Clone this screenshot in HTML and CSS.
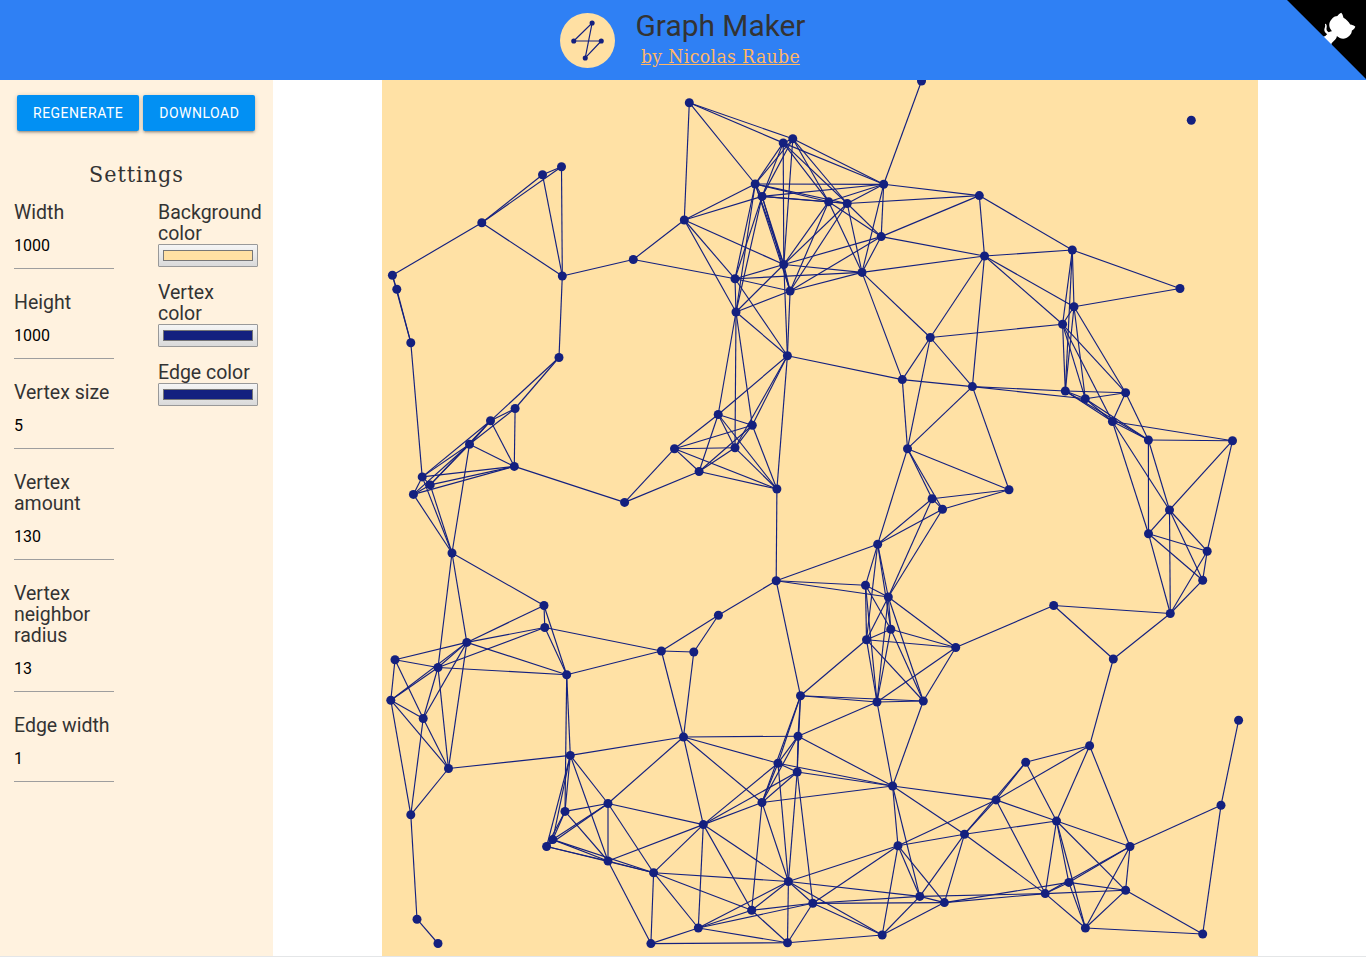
FILE: index.html
```html
<!DOCTYPE html>
<html lang="en">
<head>
<meta charset="utf-8">
<title>Graph Maker</title>
<link rel="stylesheet" href="styles.css">
</head>
<body>
<header class="header">
  <svg class="logo" viewBox="0 0 56 56">
    <circle cx="28" cy="28" r="28" fill="#ffe0a3"/>
    <path d="M14 28.5H42L25.7 45.8L32.7 10.2Z" fill="none" stroke="#14207f" stroke-width="1.2"/>
    <g fill="#14207f"><circle cx="14" cy="28.5" r="2.6"/><circle cx="42" cy="28.5" r="2.6"/><circle cx="25.7" cy="45.8" r="2.6"/><circle cx="32.7" cy="10.2" r="2.6"/></g>
  </svg>
  <div class="brand">
    <h1 class="title">Graph Maker</h1>
    <a class="author" href="#">by Nicolas Raube</a>
  </div>
  <a class="corner" href="#" aria-label="View source on GitHub">
    <svg viewBox="0 0 250 250">
      <path d="M0 0L115 115L130 115L142 142L250 250L250 0Z" fill="#000"/>
      <path d="M128.3,109.0 C113.8,99.7 119.0,89.6 119.0,89.6 C122.0,82.7 120.5,78.6 120.5,78.6 C119.2,72.0 123.4,76.3 123.4,76.3 C127.3,80.9 125.5,87.3 125.5,87.3 C122.9,97.6 130.6,101.9 134.4,103.2" fill="#fff"/>
      <path d="M115.0,115.0 C114.9,115.1 118.7,116.5 119.8,115.4 L133.7,101.6 C136.9,99.2 139.9,98.4 142.2,98.6 C133.8,88.0 127.5,74.4 143.8,58.0 C148.5,53.4 154.0,51.2 159.7,51.0 C160.3,49.4 163.2,43.6 171.4,40.1 C171.4,40.1 176.1,42.5 178.8,56.2 C183.1,58.6 187.2,61.8 190.9,65.4 C194.5,69.0 197.7,73.2 200.1,77.6 C213.8,80.2 216.3,84.9 216.3,84.9 C212.7,93.1 206.9,96.0 205.4,96.6 C205.1,102.4 203.0,107.8 198.3,112.5 C181.9,128.9 168.3,122.5 157.7,114.1 C157.9,116.9 156.7,120.9 152.7,124.9 L141.0,136.5 C139.8,137.7 141.6,141.9 141.8,141.8 Z" fill="#fff"/>
    </svg>
  </a>
</header>
<main class="main">
  <aside class="sidebar">
    <div class="actions"><button class="btn">Regenerate</button><button class="btn">Download</button></div>
    <h2 class="heading">Settings</h2>
    <div class="settings">
      <div class="numbers">
        <label class="field">Width<input class="number" value="1000"></label>
        <label class="field">Height<input class="number" value="1000"></label>
        <label class="field">Vertex size<input class="number" value="5"></label>
        <label class="field">Vertex amount<input class="number" value="130"></label>
        <label class="field">Vertex neighbor radius<input class="number" value="13"></label>
        <label class="field">Edge width<input class="number" value="1"></label>
      </div>
      <div class="colors">
        <label class="color-field">Background color<span class="picker"><span class="swatch sand"></span></span></label>
        <label class="color-field">Vertex color<span class="picker"><span class="swatch navy"></span></span></label>
        <label class="color-field">Edge color<span class="picker"><span class="swatch navy"></span></span></label>
      </div>
    </div>
  </aside>
  <section class="stage">
    <svg class="graph" id="graph" viewBox="382 80 876 876"></svg>
  </section>
</main>
<script src="graph.js"></script>
</body>
</html>
```
FILE: styles.css
```css
* { box-sizing: border-box; }
body { margin: 0; height: 957px; overflow: hidden; background: #fff; color: #333; font-family: Roboto, sans-serif; }
.header { position: relative; height: 80px; background: #2f80f4; display: flex; justify-content: center; gap: 20px; padding-top: 12px; }
.logo { width: 55px; height: 55px; margin-top: 1px; }
.brand { display: flex; flex-direction: column; align-items: center; width: 171px; }
.title { margin: -3px 0 0; font-size: 29.9px; line-height: 34px; font-weight: 400; white-space: nowrap; }
.author { font-family: "Roboto Slab", "DejaVu Serif Condensed", "DejaVu Serif", serif; font-stretch: condensed; font-size: 19.2px; line-height: 28px; letter-spacing: .37px; color: #ffb765; white-space: nowrap; text-decoration: underline; }
.corner { position: absolute; top: 0; right: 0; width: 79px; height: 79px; }
.corner svg { display: block; width: 79px; height: 79px; }
.main { display: flex; height: 877px; border-bottom: 1px solid #e4e6e8; }
.sidebar { width: 273px; flex: none; background: #fff2df; padding: 15px 12px 0 14px; }
.actions { display: flex; gap: 4px; padding-left: 3px; }
.btn { height: 36px; border: 0; border-radius: 2px; padding: 0 16px; background: #0290f3; color: #fff; font: 14px/36px Roboto, sans-serif; letter-spacing: .5px; text-transform: uppercase; box-shadow: 0 2px 2px rgba(0,0,0,.14), 0 3px 1px -2px rgba(0,0,0,.12), 0 1px 5px rgba(0,0,0,.2); }
.heading { margin: 28px 2px 12px 0; text-align: center; font: 400 23px/31px "Roboto Slab", "DejaVu Serif Condensed", "DejaVu Serif", serif; font-stretch: condensed; letter-spacing: 1px; }
.settings { display: flex; gap: 44px; }
.numbers { width: 100px; display: flex; flex-direction: column; }
.colors { width: 103px; }
.field, .color-field { display: block; font-size: 19.5px; line-height: 21px; }
.number { display: block; width: 100px; height: 46px; margin-bottom: 23px; border: 0; border-bottom: 1px solid #9e9e9e; padding: 0; background: transparent; color: #000; font: 16px Roboto, sans-serif; }
.picker { display: block; width: 100px; height: 23px; margin: 0 0 15px; padding: 5px 4px; border: 1px solid #999; background: linear-gradient(#f5f5f5, #dadada); border-radius: 1px; }
.swatch { display: block; height: 11px; border: 1px solid #777; }
.sand { background: #ffe0a3; }
.navy { background: #14207f; }
.stage { flex: 1; display: flex; justify-content: center; }
.graph { display: block; width: 876px; height: 876px; background: #ffe1a5; }
.edge { stroke: #14207f; stroke-width: 1.15; fill: none; }
.vertex { fill: #14207f; }
```
FILE: graph.js
```js
const vertices = {
  A: [689.3, 102.7], B: [783.2, 142.9], C: [792.8, 138.8], D: [755.2, 184], E: [762.1, 196.4], F: [684.3, 220],
  G: [783.8, 264.5], H: [735, 278.8], I: [790.1, 291], J: [736, 312], K: [828.6, 201.7], L: [847.2, 203.5],
  M: [883.7, 184.3], N: [881.2, 236.6], O: [862, 272.4], P: [921.5, 81], Q: [633.3, 259.5], R: [787.4, 355.8],
  S: [718.2, 414.5], T: [752.3, 425.2], U: [674.5, 448.7], V: [735, 447.8], W: [699.1, 471.5], X: [776.9, 489],
  Y: [902.3, 379.6], Z: [930.3, 337.5], a: [979.3, 195.6], b: [984.5, 256], c: [1072.3, 250], d: [1074, 306.8],
  e: [1062.6, 324.3], f: [972.4, 386.6], g: [1065.3, 391], h: [1085.3, 398.8], i: [1125.6, 392.7], j: [1112.4, 421.5],
  k: [1148.4, 440], l: [1232.5, 440.7], m: [1169.5, 510], n: [1148.5, 533.7], o: [1207.2, 551.2], p: [1202.7, 580.2],
  q: [1170.3, 613.5], r: [1180, 288.5], s: [1053.7, 605.5], t: [1113.3, 659], u: [1009, 489.8], v: [932.1, 498.7],
  w: [942.5, 509.2], x: [877.7, 544.3], y: [907.5, 448.7], z: [1191.3, 120.3],
  aa: [865.5, 585.3], ab: [888.3, 597], ac: [890.8, 629.2], ad: [866.5, 639.7], ae: [955.7, 647.5], af: [877, 702],
  ag: [923.3, 701], ah: [776.2, 580.8], ai: [800.5, 695.8], aj: [798, 736.2], ak: [778, 763.2], al: [797.2, 772],
  am: [762, 802.5], an: [683.5, 737], ao: [892.6, 786], ap: [703.3, 824.6], aq: [788.4, 881.5], ar: [812.8, 903.3],
  as: [751.7, 910.3], at: [608, 803.5], au: [570.3, 755.4], av: [698.3, 928], aw: [653.6, 872.7], ax: [608, 861],
  ay: [650.9, 943.6], ba: [787.5, 942.7], bb: [882.2, 935], bc: [898, 845.7], bd: [919.8, 896.4], be: [944.4, 902.6],
  bf: [964.5, 834.2], bg: [996, 799.9], bi: [1045.2, 893.6], bj: [1068.8, 882.4], bk: [1056.5, 821], bl: [1025.7, 762.3],
  bm: [1089.6, 745.7], bn: [1130, 846.5], bo: [1125.6, 890.3], bp: [1085.4, 928], bq: [1221, 805.3], br: [1202.7, 934],
  bs: [1238.6, 720.3], ca: [544, 605.5], cb: [544.8, 627.5], cc: [466.8, 642.4], cd: [395, 659.8], ce: [438, 667.5],
  cf: [390.8, 700.2], cg: [423.2, 718.5], ch: [448.5, 768.5], ci: [410.8, 814.8], cj: [566.7, 674.7], ck: [565, 811.4],
  cl: [552.8, 839.6], cm: [546.6, 846.5], cn: [661.4, 651], co: [693.8, 652], cp: [718.4, 615.3], cq: [417, 919.2],
  cr: [438, 943.5], cs: [452, 553], da: [515.1, 408.5], db: [490.5, 420.8], dc: [469.5, 444.3], dd: [514.3, 466.4],
  de: [422.2, 476.9], df: [430.2, 484.9], dg: [413.4, 494.4], dh: [624.6, 502.4], di: [559, 357.5], dj: [410.8, 342.7],
  dk: [561.5, 166.8], dl: [542.5, 174.7], dm: [481.8, 222.8], dn: [562.3, 276], do: [392.4, 275.3], dp: [396.8, 289.3]
};

// Each row lists a vertex followed by the neighbours it connects to.
const neighbours = `
A B C D F|B D E M K L G|C D E M K L G B|D M K L G I H J F E|E M K L F G I H J
F G H J Q|G H I J K L N O R|H I O J Q R|I J K L N O R|J R S V T
K L M N O|L M N O a|M N O P a|N O a b|O b Z Y|R Y S T V X
S T U V W X|T U V W X|U V W X dh|V W X|W X dh|X ah
a b c|b c d e Z f|c d e r g|e d Z g h i j|d r g h i|Y Z f y|Z y f|f y u g h
g h i j k|h i j k|i j k|j k l m n|k l m n|l m o|m n o p q|n o p q|o p q|p q|q s t|s t|t bm
y u v w x|u v w|v w x ab|w x ab|x ah aa ab ad ac
aa ab ad ac af|ab ac ad af ag ae|ac ad ae af ag|ad ae af ag ai|ae af ag s|af ag|ah aa ab ai cp
ai af ag aj ak al am|aj af ak al am an ao|ak al am ao an ap aq|al am ao ap aq ar|am ao ap aq as an
an ap at au cn co|ap aq as av aw ax at|aw aq as av ay ax at|ay av ba ax|av ba as aq ar
as aq ar ba|aq ar ba bb bc bd|ar ba bb bc bd be|ba bb|bb bc bd be|bc bd be ao bf bg
ao bd bf bg af ag|bd be bf bi|be bf bi bj|bf bg bi bk bl|bg bl bk bi bm|bl bm bk|bm bk bn
bk bn bi bj bo bp|bn bi bj bo bp bq|bj bi bo bp|bi bo bp|bo bp br|bp br|bq br bs
ca cs cc cb cj|cb cc ce cj cn|cc cd ce cf cg ch cj cs|cd ce cf cg|ce cf cg ch cj cs|cf cg ch ci
cg ch ci|ch ci au|cj au ck cn|cn co cp|co cp|ci cq|cq cr
au ck cl cm at ax|ck cl cm at ax|cl cm at ax aw|cm at ax aw|at ax
di db da|da db dc dd|db dc dd de|dc dd de df dg cs db|df db|dd de df dg dh|de df dg cs dj|df dg cs|dg cs
dk dl dm dn|dl dm dn|dm dn do|do dp dj|dp dj|dn di Q`;

const svg = document.getElementById('graph');

function add(tag, attributes) {
  const node = document.createElementNS('http://www.w3.org/2000/svg', tag);
  for (const name in attributes) node.setAttribute(name, attributes[name]);
  svg.appendChild(node);
}

for (const row of neighbours.trim().split(/[|\n]/)) {
  const [from, ...others] = row.trim().split(' ');
  const [x1, y1] = vertices[from];
  for (const to of others) {
    const [x2, y2] = vertices[to];
    add('line', { class: 'edge', x1, y1, x2, y2 });
  }
}
for (const [cx, cy] of Object.values(vertices)) {
  add('circle', { class: 'vertex', cx, cy, r: 4.5 });
}
```
